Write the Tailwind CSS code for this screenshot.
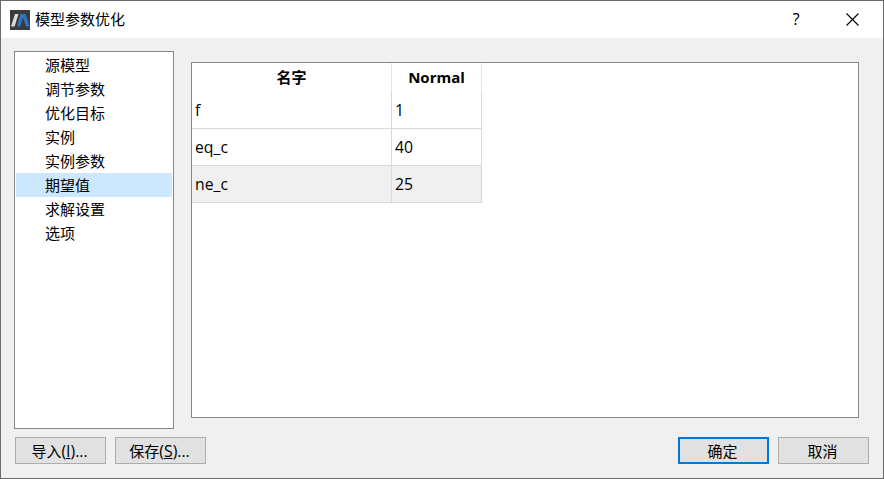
<!DOCTYPE html>
<html lang="zh-CN">
<head>
<meta charset="utf-8">
<title>模型参数优化</title>
<script src="https://cdn.jsdelivr.net/npm/@tailwindcss/browser@4"></script>
</head>
<body class="font-['Open_Sans','Noto_Sans_CJK_SC',sans-serif] text-[15px] leading-6 text-black">
<div class="flex h-[479px] w-[884px] flex-col overflow-hidden border border-[#6b6b6b] bg-[#f0f0f0]">
  <header class="flex h-[37px] shrink-0 items-center bg-white pl-[9px]">
    <svg class="size-5" viewBox="0 0 20 20">
      <rect width="20" height="20" fill="#3b3b3d"/>
      <path d="M1 16.5L5 4H8.5L4.5 16.5Z" fill="#d9dddd"/>
      <path d="M7 16.5L10.5 4H15.5L19.7 16.5H16L13 7.5L10.2 16.5Z" fill="#3274bd"/>
    </svg>
    <h1 class="ml-[5px] pb-[2px]">模型参数优化</h1>
    <span class="ml-auto w-[10px] pb-[2px] text-center text-[16.5px]">?</span>
    <svg class="mr-[24px] ml-[45px] mb-px size-[13px]" viewBox="0 0 13 13" fill="none" stroke="#000" stroke-width="1.1"><path d="M.5 .5L12.5 12.5M12.5 .5L.5 12.5"/></svg>
  </header>
  <main class="flex h-[391px] shrink-0 pt-[13px] pl-[13px]">
    <ul class="h-[378px] w-[160px] border border-[#828790] bg-white p-px">
      <li class="h-6 pl-[29px]">源模型</li>
      <li class="h-6 pl-[29px]">调节参数</li>
      <li class="h-6 pl-[29px]">优化目标</li>
      <li class="h-6 pl-[29px]">实例</li>
      <li class="h-6 pl-[29px]">实例参数</li>
      <li class="h-6 bg-[#cce8ff] pl-[29px]">期望值</li>
      <li class="h-6 pl-[29px]">求解设置</li>
      <li class="h-6 pl-[29px]">选项</li>
    </ul>
    <section class="mt-[11px] ml-[17px] h-[356px] w-[668px] border border-[#828790] bg-white">
      <div class="grid w-[290px] grid-cols-[200px_90px] text-[15.75px]">
        <div class="h-[29px] border-r border-[#e5e5e5] pt-[2px] text-center text-[15px] font-bold">名字</div>
        <div class="h-[29px] border-r border-[#e5e5e5] pt-[2px] text-center text-[15px] font-bold">Normal</div>
        <div class="h-[37px] border-r border-b border-[#d8d8d8] pt-[6px] pl-[3px]">f</div>
        <div class="h-[37px] border-r border-b border-[#d8d8d8] pt-[6px] pl-[3px]">1</div>
        <div class="h-[37px] border-r border-b border-[#d8d8d8] pt-[6px] pl-[3px]">eq_c</div>
        <div class="h-[37px] border-r border-b border-[#d8d8d8] pt-[6px] pl-[3px]">40</div>
        <div class="h-[37px] border-r border-b border-[#d8d8d8] bg-[#f0f0f0] pt-[6px] pl-[3px]">ne_c</div>
        <div class="h-[37px] border-r border-b border-[#d8d8d8] bg-[#f0f0f0] pt-[6px] pl-[3px]">25</div>
      </div>
    </section>
  </main>
  <footer class="flex gap-[9px] pt-[8px] pr-[14px] pl-[14px]">
    <button class="flex h-[27px] w-[91px] items-center justify-center border border-[#adadad] bg-[#e1e1e1] pr-[2px]"><span>导入<span class="text-[15.75px]">(<u>I</u>)...</span></span></button>
    <button class="flex h-[27px] w-[91px] items-center justify-center border border-[#adadad] bg-[#e1e1e1] pr-[2px]"><span>保存<span class="text-[15.75px]">(<u>S</u>)...</span></span></button>
    <button class="ml-auto flex h-[27px] w-[91px] items-center justify-center border-2 border-[#0078d7] bg-[#e1e1e1] pr-[2px]">确定</button>
    <button class="flex h-[27px] w-[91px] items-center justify-center border border-[#adadad] bg-[#e1e1e1] pr-[2px]">取消</button>
  </footer>
</div>
</body>
</html>
